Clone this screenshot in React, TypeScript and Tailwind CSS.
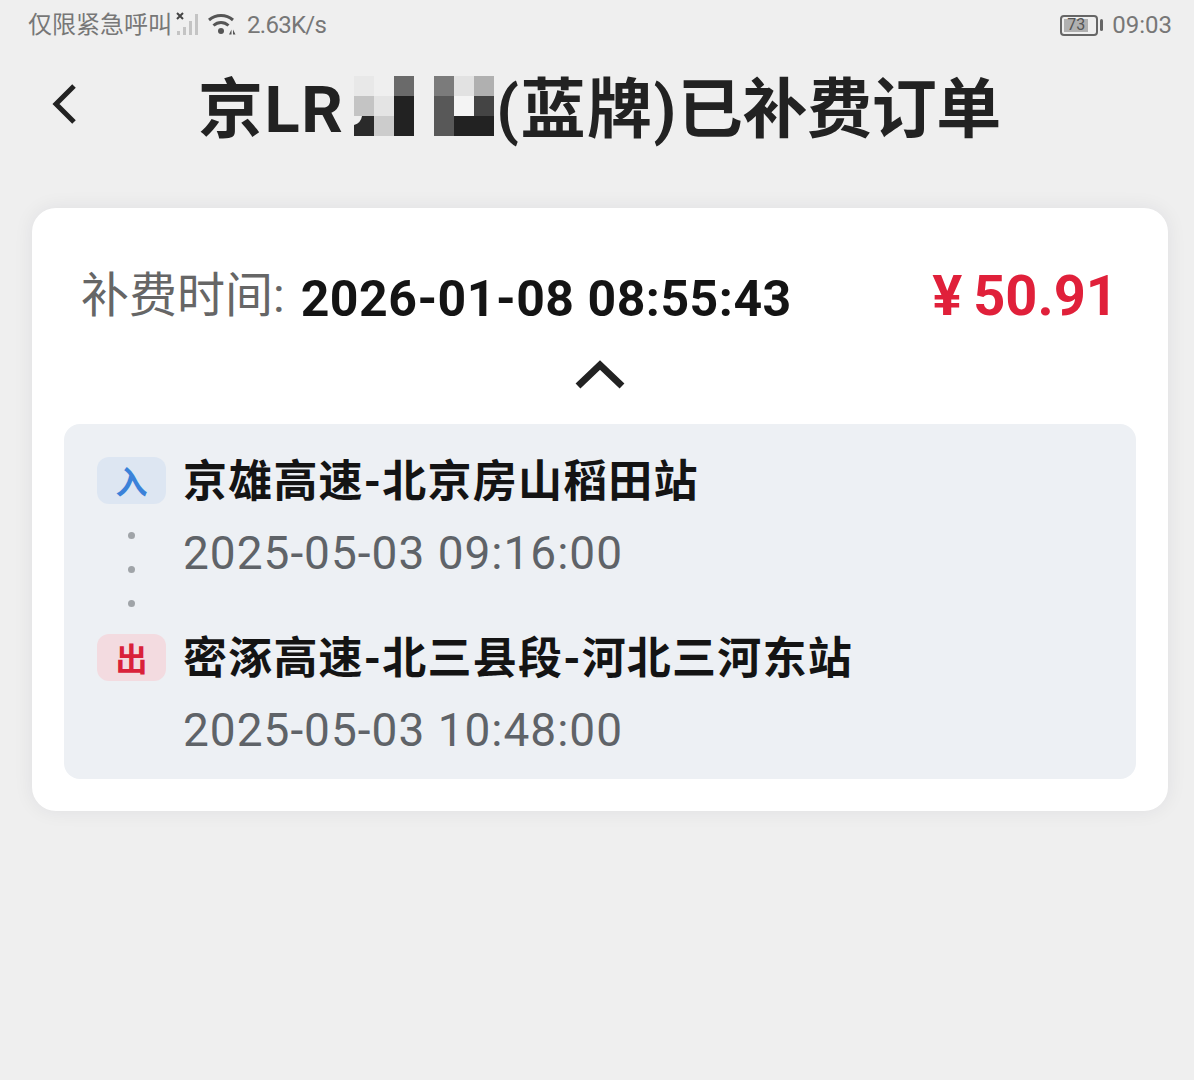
const BASE = "font-['Roboto','Noto_Sans_CJK_SC',sans-serif]";

const MOSAIC_LEFT = [
  ["#e8e8e8", "#efefef", "#6a6a6a"],
  ["#c4c4c4", "#e4e4e4", "#222222"],
  ["#2a2a2a", "#cccccc", "#222222"],
];

const MOSAIC_RIGHT = [
  ["#7b7b7b", "#e2e2e2", "#b0b0b0"],
  ["#585858", "#f4f4f4", "#444444"],
  ["#585858", "#222222", "#222222"],
];

function PlateMosaic() {
  return (
    <svg width="142" height="60" viewBox="0 0 142 60" className="shrink-0">
      {MOSAIC_LEFT.map((row, y) =>
        row.map((c, x) => <rect key={`l${x}${y}`} x={x * 20} y={y * 20} width="20" height="20" fill={c} />),
      )}
      {MOSAIC_RIGHT.map((row, y) =>
        row.map((c, x) => <rect key={`r${x}${y}`} x={80 + x * 20} y={y * 20} width="20" height="20" fill={c} />),
      )}
      <rect x="60" y="0" width="20" height="60" fill="#efefef" />
      <path d="M0 40h20v20H0z" fill="#2a2a2a" />
      <path d="M0 40h8q-1 7-8 9z" fill="#efefef" />
      <path d="M120 60V40h20q0 20-20 20z" fill="#222222" />
    </svg>
  );
}

function SignalIcon() {
  return (
    <svg width="26" height="26" viewBox="0 0 26 26" className="shrink-0">
      <path d="M1 1l6 6M7 1L1 7" stroke="#444" strokeWidth="2" />
      <rect x="1" y="19" width="3" height="4" fill="#c4c4c4" />
      <rect x="7" y="15" width="3" height="8" fill="#c4c4c4" />
      <rect x="13" y="9" width="3" height="14" fill="#c4c4c4" />
      <rect x="19" y="2" width="3" height="21" fill="#c4c4c4" />
    </svg>
  );
}

function WifiIcon() {
  return (
    <svg width="28" height="24" viewBox="0 0 28 24" className="shrink-0">
      <path d="M1 7c7-6 17-6 24 0" fill="none" stroke="#555" strokeWidth="3" />
      <path d="M5.500 12.500c4.500-4 10.500-4 15 0" fill="none" stroke="#555" strokeWidth="3" />
      <circle cx="13" cy="18" r="3" fill="#555" />
      <path d="M21 21.500l2.500-5v5zM25 16.500l2.500 5H25z" fill="#555" />
    </svg>
  );
}

function Battery() {
  return (
    <div className="flex items-center gap-[2px]">
      <div className="flex h-[21px] w-[38px] items-center rounded-[4px] border-2 border-[#666] p-[2px]">
        <div className="flex h-full w-[24px] items-center justify-center bg-[#b0b0b0] text-[16px] leading-none text-[#555]">
          73
        </div>
      </div>
      <div className="h-[12px] w-[3px] rounded-sm bg-[#666]" />
    </div>
  );
}

function Stop({
  badge,
  badgeClass,
  name,
  time,
}: {
  badge: string;
  badgeClass: string;
  name: string;
  time: string;
}) {
  return (
    <div className="flex gap-[17px]">
      <div
        className={`mt-[2px] flex h-[47px] w-[69px] shrink-0 items-center justify-center rounded-[12px] pt-[5px] text-[32px] font-bold leading-none ${badgeClass}`}
      >
        {badge}
      </div>
      <div className="flex flex-col">
        <div className="h-[52px] text-[44px] font-bold leading-[54px] tracking-[1.2px] text-[#141414]">{name}</div>
        <div className="mt-[20px] h-[52px] text-[46px] leading-[52px] tracking-[1px] text-[#5f6368]">{time}</div>
      </div>
    </div>
  );
}

export default function App() {
  return (
    <div className={`${BASE} flex h-[1080px] w-[1194px] flex-col overflow-hidden bg-[#efefef]`}>
      <div className="flex h-[50px] items-center justify-between pl-[28px] pr-[22px] text-[24px] text-[#777]">
        <div className="flex items-center">
          <span>仅限紧急呼叫</span>
          <span className="ml-[4px]">
            <SignalIcon />
          </span>
          <span className="ml-[6px]">
            <WifiIcon />
          </span>
          <span className="ml-[11px] tracking-[-0.7px]">2.63K/s</span>
        </div>
        <div className="flex items-center gap-[9px]">
          <Battery />
          <span>09:03</span>
        </div>
      </div>

      <div className="mt-[18px] flex h-[80px] items-center pl-[50px]">
        <svg width="28" height="44" viewBox="0 0 28 44" className="mb-[8px] shrink-0">
          <path d="M24 4L6 22l18 18" fill="none" stroke="#222" strokeWidth="5" />
        </svg>
        <div className="ml-[120px] flex items-center text-[65px] font-bold leading-[80px] text-[#222]">
          <span className="mt-[4px] tracking-[1.5px]">京LR</span>
          <span className="mb-[4px] ml-[10px] flex">
            <PlateMosaic />
          </span>
          <span className="mt-[4px] tracking-[1.5px]">(蓝牌)</span>
          <span className="mt-[4px] tracking-[-0.4px]">已补费订单</span>
        </div>
      </div>

      <div className="ml-[32px] mr-[26px] mt-[60px] rounded-[24px] bg-white px-[32px] pb-[32px] pt-[54px] shadow-[0_0_20px_rgba(20,30,60,0.07)]">
        <div className="flex items-center justify-between pl-[17px] pr-[18px]">
          <div className="flex items-center">
            <span className="text-[48px] leading-[60px] text-[#666]">补费时间:</span>
            <span className="ml-[16px] mt-[7px] text-[50px] font-bold leading-[60px] tracking-[0.5px] text-[#141414]">
              2026-01-08 08:55:43
            </span>
          </div>
          <span className="text-[56px] font-bold leading-[60px] text-[#e0203a] [word-spacing:-3px]">¥ 50.91</span>
        </div>

        <div className="mt-[31px] flex h-[34px] justify-center">
          <svg width="50" height="30" viewBox="0 0 50 30">
            <path d="M3 26L25 5l22 21" fill="none" stroke="#222" strokeWidth="7" />
          </svg>
        </div>

        <div className="mt-[30px] rounded-[16px] bg-[#edf0f4] pb-[23px] pl-[33px] pr-[16px] pt-[31px]">
          <Stop
            badge="入"
            badgeClass="bg-[#dde6f2] text-[#3b82d9]"
            name="京雄高速-北京房山稻田站"
            time="2025-05-03 09:16:00"
          />
          <div className="-mt-[47px] flex h-[100px] w-[69px] flex-col items-center gap-[27px]">
            <div className="h-[7px] w-[7px] rounded-full bg-[#a0a4a8]" />
            <div className="h-[7px] w-[7px] rounded-full bg-[#a0a4a8]" />
            <div className="h-[7px] w-[7px] rounded-full bg-[#a0a4a8]" />
          </div>
          <Stop
            badge="出"
            badgeClass="bg-[#f3dbe0] text-[#d9213a]"
            name="密涿高速-北三县段-河北三河东站"
            time="2025-05-03 10:48:00"
          />
        </div>
      </div>
    </div>
  );
}
